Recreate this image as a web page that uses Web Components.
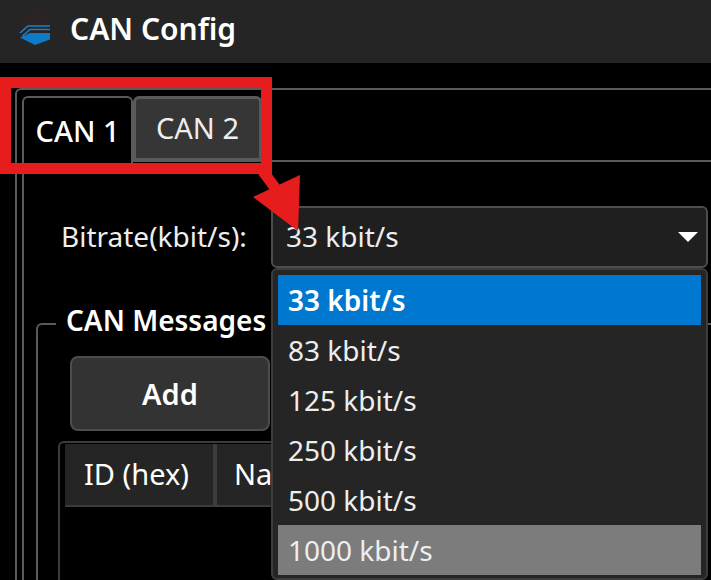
<!DOCTYPE html>
<html>
<head>
<meta charset="utf-8">
<title>CAN Config</title>
<style>
html, body { margin: 0; height: 100%; overflow: hidden; background: #000; }
body { font-family: "Noto Sans", "Open Sans", sans-serif; color: #fff; }
</style>
</head>
<body>
<can-window>
    <title-bar slot="title">CAN Config</title-bar>
    <tab-frame>
        <tab-button slot="tabs" active>CAN 1</tab-button>
        <tab-button slot="tabs">CAN 2</tab-button>
        <bitrate-row></bitrate-row>
        <group-box label="CAN Messages">
            <push-button>Add</push-button>
            <message-table></message-table>
        </group-box>
    </tab-frame>
    <red-callout></red-callout>
</can-window>
<script>
class CanWindow extends HTMLElement {
    constructor() {
        super();
        this.attachShadow({mode: 'open'});
        this.shadowRoot.innerHTML = `
        <style>
        :host{display:flex;flex-direction:column;position:relative;width:711px;height:580px;overflow:hidden;background:#000}
        main{flex:1;min-height:0;display:flex;flex-direction:column;padding:25px 0 0 15px}
        </style>
        <slot name="title"></slot>
        <main><slot></slot></main>`;
    }
}

class TitleBar extends HTMLElement {
    constructor() {
        super();
        this.attachShadow({mode: 'open'});
        this.shadowRoot.innerHTML = `
        <style>
        :host{display:flex;align-items:center;gap:19px;height:63px;padding-left:19px;background:#252525;font-size:30px;font-weight:600;box-sizing:border-box}
        svg{width:32px;height:24px;flex:none;margin-top:2px;overflow:visible}
        span{margin-top:-6px}
        </style>
        <svg viewBox="0 0 32 24">
            <circle cx="16" cy="4" r="15" fill="#2a2424"/>
            <path d="M1 12 9 5H31" fill="none" stroke="#1f7fc4" stroke-width="1.6"/>
            <path d="M3.5 15 11 8.5H31" fill="none" stroke="#1f7fc4" stroke-width="1.6"/>
            <path d="M1 16.500 11 12H31V18.500L16 24Z" fill="#0f7ac6"/>
        </svg>
        <span><slot></slot></span>`;
    }
}

class TabFrame extends HTMLElement {
    constructor() {
        super();
        this.attachShadow({mode: 'open'});
        this.shadowRoot.innerHTML = `
        <style>
        :host{display:flex;flex:1;min-height:0;box-sizing:border-box;border:2px solid #5a5a5a;border-width:2px 0 0 2px;border-top-left-radius:6px;padding:6px 0 0 5px}
        .wrap{flex:1;display:flex;flex-direction:column;min-width:0}
        .tabs{display:flex;height:65px;flex:none;position:relative;z-index:1}
        .pane{flex:1;margin-top:-1px;border:2px solid #5a5a5a;border-width:2px 0 0 2px;padding:44px 0 0 12px;min-height:0}
        </style>
        <div class="wrap">
            <div class="tabs"><slot name="tabs"></slot></div>
            <div class="pane"><slot></slot></div>
        </div>`;
    }
}

class TabButton extends HTMLElement {
    constructor() {
        super();
        this.attachShadow({mode: 'open'});
        this.shadowRoot.innerHTML = `
        <style>
        :host{display:flex;align-items:center;justify-content:center;box-sizing:border-box;font-size:29px;border-radius:6px 6px 0 0;
            width:129px;height:65px;background:#363636;border:3px solid #5a5a5a;color:#eee;padding-bottom:3px}
        :host([active]){width:111px;height:67px;background:#000;border:2px solid #5a5a5a;border-bottom:none;color:#fff;padding-bottom:0;font-weight:500}
        </style>
        <slot></slot>`;
    }
}

class BitrateRow extends HTMLElement {
    constructor() {
        super();
        this.attachShadow({mode: 'open'});
        this.shadowRoot.innerHTML = `
        <style>
        :host{display:flex;align-items:center;height:62px;padding-left:25px;font-size:28px;color:#eee}
        label{width:210px;flex:none;padding-bottom:2px}
        </style>
        <label>Bitrate(kbit/s):</label>
        <combo-box value="33 kbit/s"></combo-box>`;
    }
}

class ComboBox extends HTMLElement {
    static rates = ['33 kbit/s', '83 kbit/s', '125 kbit/s', '250 kbit/s', '500 kbit/s', '1000 kbit/s'];

    constructor() {
        super();
        this.attachShadow({mode: 'open'});
    }

    connectedCallback() {
        const value = this.getAttribute('value');
        const items = ComboBox.rates.map((rate, i) => {
            const cls = i === 0 ? 'sel' : i === ComboBox.rates.length - 1 ? 'hover' : '';
            return `<li class="${cls}">${rate}</li>`;
        }).join('');
        this.shadowRoot.innerHTML = `
        <style>
        :host{display:block;position:relative;width:437px;height:62px;flex:none;font-size:28px}
        .field{box-sizing:border-box;height:62px;display:flex;align-items:center;justify-content:space-between;padding:0 8px 0 13px;background:#1f1f1f;border:2px solid #4d4d4d;border-radius:6px;color:#eee}
        .field span{padding-bottom:2px}
        .field i{width:0;height:0;border:10px solid transparent;border-top:10px solid #fff;border-bottom:0}
        ul{position:absolute;z-index:2;left:0;top:62px;width:437px;height:312px;box-sizing:border-box;margin:0;padding:5px;list-style:none;background:#252525;border:2px solid #3c3c3c;border-radius:6px}
        li{height:50px;line-height:50px;padding-left:10px;color:#eee}
        li.sel{background:#0078d0;color:#fff;font-weight:600}
        li.hover{background:#7c7c7c}
        </style>
        <div class="field"><span>${value}</span><i></i></div>
        <ul>${items}</ul>`;
    }
}

class GroupBox extends HTMLElement {
    constructor() {
        super();
        this.attachShadow({mode: 'open'});
    }

    connectedCallback() {
        this.shadowRoot.innerHTML = `
        <style>
        :host{display:block;position:relative;box-sizing:border-box;height:400px;margin-top:55px;border:2px solid #5a5a5a;border-width:2px 0 0 2px;border-top-left-radius:6px;padding:31px 0 0 20px}
        h2{position:absolute;margin:0;left:18px;top:-23px;padding:0 10px;background:#000;font-size:28px;font-weight:600;line-height:36px;white-space:nowrap}
        .body{display:flex;flex-direction:column;align-items:flex-start;gap:10px;margin-left:12px}
        ::slotted(message-table){margin-left:-12px}
        </style>
        <h2>${this.getAttribute('label')}</h2>
        <div class="body"><slot></slot></div>`;
    }
}

class PushButton extends HTMLElement {
    constructor() {
        super();
        this.attachShadow({mode: 'open'});
        this.shadowRoot.innerHTML = `
        <style>
        :host{display:flex;align-items:center;justify-content:center;box-sizing:border-box;width:200px;height:75px;background:#333;border:2px solid #4d4d4d;border-radius:8px;font-size:29px;font-weight:600;padding-bottom:1px}
        </style>
        <slot></slot>`;
    }
}

class MessageTable extends HTMLElement {
    constructor() {
        super();
        this.attachShadow({mode: 'open'});
        this.shadowRoot.innerHTML = `
        <style>
        :host{display:block;box-sizing:border-box;width:640px;height:200px;border:solid #3c3c3c;border-width:2px 0 0 2px;border-top-left-radius:6px;padding:1px 0 0 5px;font-size:29px}
        .head{display:flex;gap:4px;background:#3c3c3c;padding-bottom:2px;height:61px}
        .head div{background:#252525;display:flex;align-items:center;padding-bottom:2px;box-sizing:border-box}
        .id{width:148px;padding-left:19px}
        .name{width:200px;padding-left:17px}
        </style>
        <div class="head"><div class="id">ID (hex)</div><div class="name">Na</div></div>`;
    }
}

class RedCallout extends HTMLElement {
    constructor() {
        super();
        this.attachShadow({mode: 'open'});
        this.shadowRoot.innerHTML = `
        <style>
        :host{position:absolute;left:0;top:0;width:711px;height:580px;pointer-events:none;z-index:3}
        svg{display:block}
        </style>
        <svg width="711" height="580" viewBox="0 0 711 580">
            <rect x="5.500" y="82.500" width="261" height="86" fill="none" stroke="#e71d1d" stroke-width="11"/>
            <path d="M262 170 284 200" stroke="#e71d1d" stroke-width="11" fill="none"/>
            <path d="M253 197 300 175 298 231Z" fill="#e71d1d"/>
        </svg>`;
    }
}

customElements.define('can-window', CanWindow);
customElements.define('title-bar', TitleBar);
customElements.define('tab-frame', TabFrame);
customElements.define('tab-button', TabButton);
customElements.define('bitrate-row', BitrateRow);
customElements.define('combo-box', ComboBox);
customElements.define('group-box', GroupBox);
customElements.define('push-button', PushButton);
customElements.define('message-table', MessageTable);
customElements.define('red-callout', RedCallout);
</script>
</body>
</html>
